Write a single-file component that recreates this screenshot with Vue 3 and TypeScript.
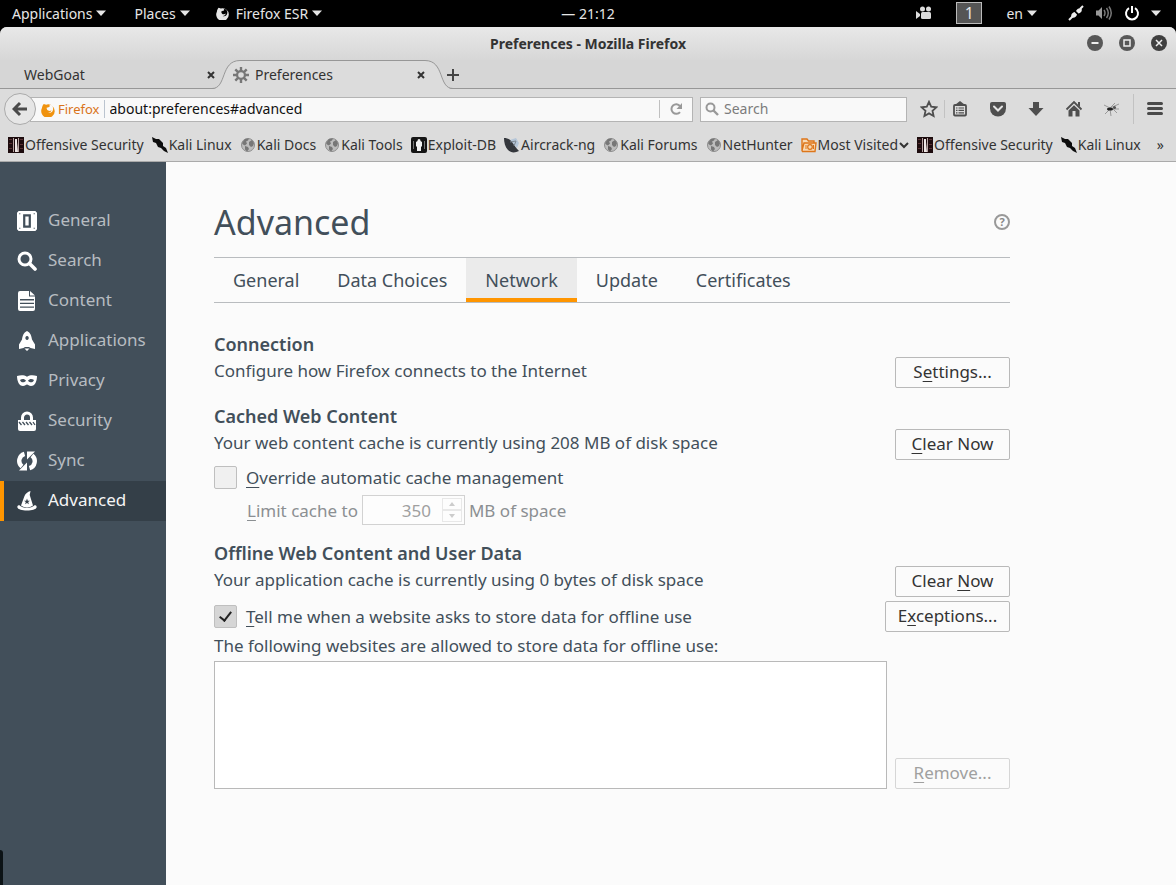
<script setup lang="ts">
import { ref } from 'vue'

interface Bookmark { icon: string; label: string; menu?: boolean }
interface Category { icon: string; label: string }

const bookmarks: Bookmark[] = [
  { icon: 'offsec', label: 'Offensive Security' },
  { icon: 'kali', label: 'Kali Linux' },
  { icon: 'globe', label: 'Kali Docs' },
  { icon: 'globe', label: 'Kali Tools' },
  { icon: 'exploit', label: 'Exploit-DB' },
  { icon: 'aircrack', label: 'Aircrack-ng' },
  { icon: 'globe', label: 'Kali Forums' },
  { icon: 'globe', label: 'NetHunter' },
  { icon: 'folder', label: 'Most Visited', menu: true },
  { icon: 'offsec', label: 'Offensive Security' },
  { icon: 'kali', label: 'Kali Linux' },
]

const categories: Category[] = [
  { icon: 'general', label: 'General' },
  { icon: 'search', label: 'Search' },
  { icon: 'content', label: 'Content' },
  { icon: 'apps', label: 'Applications' },
  { icon: 'privacy', label: 'Privacy' },
  { icon: 'security', label: 'Security' },
  { icon: 'sync', label: 'Sync' },
  { icon: 'advanced', label: 'Advanced' },
]

const tabs = ['General', 'Data Choices', 'Network', 'Update', 'Certificates']

const category = ref('Advanced')
const tab = ref('Network')
const address = ref('about:preferences#advanced')
const query = ref('')
const overrideCache = ref(false)
const cacheSize = ref('350')
const tellMe = ref(true)
</script>

<template>
  <div class="desktop">
    <svg class="sprite" aria-hidden="true">
      <symbol id="i-offsec" viewBox="0 0 16 16">
        <path fill="#1d0c0e" d="M0 0h16v16H0z" />
        <path fill="#5b3234" d="M1 2h3v1H1zM1 6h3v1H1zM1 11h3v1H1zM12 2h3v1h-3zM12 7h3v1h-3zM12 11h3v1h-3z" />
        <path fill="#b9a6a4" d="M5 1h1v14H5zM10 1h1v14h-1z" />
        <path fill="#f0e8e6" d="M7 2h2v3l1 10H7z" />
      </symbol>
      <symbol id="i-kali" viewBox="0 0 16 16">
        <path fill="#0d0d0d" d="M0 0l4 2 3 0 4 4 0 3 3 2 2 5-4-2-3-3-3-1-2-4-3-1z" />
      </symbol>
      <symbol id="i-globe" viewBox="0 0 16 16">
        <circle cx="8" cy="8" r="6.500" fill="#bdbdbd" stroke="#8d8d8d" />
        <path fill="#777" d="M2 6l3-4 4-.5-1 2-2 1 1 2-2 2-2-1zM9 5l3-2 2 3-1 3-2 1-2-2zM5 9l3 1 1 2-2 2.500-2-2z" />
      </symbol>
      <symbol id="i-exploit" viewBox="0 0 16 16">
        <rect width="16" height="16" rx="2" fill="#151515" />
        <path fill="#f2f2f2" d="M8 2c1 0 1.500.7 1.500 2l1.500 1v4l-1 1v4H6v-4L5 9V5l1.500-1C6.500 2.700 7 2 8 2z" />
        <path fill="#777" d="M2 4h1v8H2zM13 4h1v8h-1z" />
      </symbol>
      <symbol id="i-aircrack" viewBox="0 0 16 16">
        <path fill="#b5c6d8" d="M6 3l6-2 3 5-2 5z" />
        <path fill="#34373c" d="M0 1c3 0 6 1 8 4s4 6 7 9c-4 2-8 2-11-1S0 5 0 1z" />
        <path d="M6 5l6-1-2 5" fill="none" stroke="#7d8791" />
      </symbol>
      <symbol id="i-folder" viewBox="0 0 16 16">
        <path d="M1 13.500V2h5l1.500 2H13v2M1 13.500L3 6h12l-1 8.500H1.500z" fill="#f8d9b4" stroke="#dd761a" stroke-width="1.400" />
        <circle cx="9" cy="10" r="2.300" fill="none" stroke="#dd761a" stroke-width="1.200" />
        <path d="M5 8v4M12.500 8v4" stroke="#dd761a" />
      </symbol>
      <symbol id="i-firefox" viewBox="0 0 16 16">
        <path fill="currentColor" fill-rule="evenodd" d="M3 2l2.500.8A7.200 7.200 0 1 1 1 6.500C1.200 4.500 2 3 3 2zM8.500 3c1.500 1 .8 2.200-.5 2.500l-2 .7c0 1.800 1 3.300 3 3.300.8 0 1.700-.3 2.200-.8-.4 2-2 2.800-3.700 2.600 3 1.200 5.500-1 5.500-4C13 4.500 11 3 8.500 3z" />
      </symbol>
      <symbol id="i-general" viewBox="0 0 18 18">
        <path fill="currentColor" fill-rule="evenodd" d="M1.500 0h15L18 1.500v15L16.500 18h-15L0 16.500v-15zM5.500 3v12h7V3zM7.500 5h3v8h-3zM2 2v1h1V2zm13 0v1h1V2zM2 15v1h1v-1zm13 0v1h1v-1z" />
      </symbol>
      <symbol id="i-search" viewBox="0 0 20 20">
        <circle cx="8" cy="8" r="6" fill="none" stroke="currentColor" stroke-width="3" />
        <path d="M12.500 12.500L18 18" stroke="currentColor" stroke-width="3.600" stroke-linecap="round" />
      </symbol>
      <symbol id="i-content" viewBox="0 0 18 20">
        <path fill="currentColor" fill-rule="evenodd" d="M2 0h9v5.500h6V18q0 2-2 2H2q-2 0-2-2V2Q0 0 2 0zm10 0l5 4.500h-5zM2 8v1.400h14V8zm0 3.700v1.400h14v-1.400zm0 3.700v1.400h14v-1.400z" />
      </symbol>
      <symbol id="i-apps" viewBox="0 0 20 20">
        <path fill="currentColor" fill-rule="evenodd" d="M10 0c3.500 1.500 4.500 5 5 8.500l3 5V18l-4.500-1-1.500-1H8l-1.500 1L2 18v-4.500l3-5C5.500 5 6.500 1.500 10 0zm0 5a1.700 2 0 1 0 .1 0zM7.500 17.500h5L10 20z" />
      </symbol>
      <symbol id="i-privacy" viewBox="0 0 20 12">
        <path fill="currentColor" fill-rule="evenodd" d="M0 1c4-1 7-1 10 .7C13 0 16 0 20 1c0 5-2 10-6 10-2 0-3-1.500-4-1.500S8 11 6 11C2 11 0 6 0 1zm3 4c1 3 4 3 6 .7C7.500 3.500 5 3.500 3 5zm14 0c-2-1.500-4.500-1.500-6 .7C13 8 16 8 17 5z" />
      </symbol>
      <symbol id="i-security" viewBox="0 0 18 20">
        <path d="M4.500 10V6.500a4.500 4.500 0 0 1 9 0V10" fill="none" stroke="currentColor" stroke-width="3" />
        <path fill="currentColor" d="M0 9h18v9q0 2-2 2H2q-2 0-2-2z" />
        <path d="M1 11l2.500 3M4.500 11L7 14M8 11l2.500 3M11.500 11l2.500 3M15 11l2 3" stroke="#424f5a" stroke-width="1.300" />
      </symbol>
      <symbol id="i-sync" viewBox="0 0 20 20">
        <path d="M7.500 2.800A7.300 7.300 0 0 0 5 15.500M12.500 17.200A7.300 7.300 0 0 0 15 4.500" fill="none" stroke="currentColor" stroke-width="4.400" />
        <path fill="currentColor" d="M2 19.500h8v-8zM18 .5h-8v8z" />
      </symbol>
      <symbol id="i-advanced" viewBox="0 0 20 20">
        <path fill="currentColor" fill-rule="evenodd" d="M13.500 0l-.8 4L16 14.500c-3.500 2.500-8.500 2.500-12 0L7.500 5C8.500 2.500 10.500 1 13.500 0zM10 7.500l-.8 2.200H7l1.800 1.300-.7 2.200L10 12l1.900 1.200-.7-2.200L13 9.700h-2.200z" />
        <path fill="currentColor" d="M2 14c4.500 3.800 11.500 3.800 16 0 3.500 1.500 2 5.500-8 5.500S-1.500 15.500 2 14z" />
      </symbol>
      <symbol id="i-caret" viewBox="0 0 10 6"><path fill="currentColor" d="M0 .5h10L5 6z" /></symbol>
      <symbol id="i-x" viewBox="0 0 8 8"><path d="M1 1l6 6M7 1L1 7" stroke="currentColor" stroke-width="2" /></symbol>
    </svg>

    <header class="panel">
      <div class="panel-side">
        <button class="panel-item apps">Applications <svg class="caret"><use href="#i-caret" /></svg></button>
        <button class="panel-item places">Places <svg class="caret"><use href="#i-caret" /></svg></button>
        <button class="panel-item">
          <svg class="fx"><use href="#i-firefox" /></svg>Firefox ESR <svg class="caret"><use href="#i-caret" /></svg>
        </button>
      </div>
      <div class="clock">— 21:12</div>
      <div class="panel-side status">
        <svg class="camera" viewBox="0 0 16 14" aria-hidden="true">
          <g fill="#ddd"><circle cx="6.500" cy="3" r="2.500" /><circle cx="12.500" cy="3" r="2.500" /><rect x="5" y="6" width="10" height="7" rx="1.500" /><path d="M0 5l4 3v2l-4 3z" /></g>
        </svg>
        <span class="workspace">1</span>
        <button class="panel-item lang">en <svg class="caret"><use href="#i-caret" /></svg></button>
        <button class="panel-item tray" aria-label="System menu">
          <svg width="16" height="16" viewBox="0 0 16 16"><path d="M1 15l4-4" stroke="#eee" stroke-width="2" /><path d="M15 1l-3 3" stroke="#eee" stroke-width="2" /><path d="M3.500 12.500c-1-3 1-5 3-5.500l2.500 2.500c-.5 2-2.500 4-5.500 3zM8 6c1-2 3-3.500 5.500-2.500C14.500 6 13 8 10.500 8.500z" fill="#eee" /></svg>
          <svg width="18" height="16" viewBox="0 0 18 16"><path fill="#999" d="M1 5.500h2.500L7 2v12l-3.500-3.500H1z" /><path d="M9 5q2 3 0 6M11.500 3q3.500 5 0 10M14 1.500q4.500 6.500 0 13" fill="none" stroke="#777" stroke-width="1.500" /></svg>
          <svg width="16" height="16" viewBox="0 0 16 16"><path d="M5 3.200a6 6 0 1 0 6 0M8 1v7" fill="none" stroke="#fff" stroke-width="2" /></svg>
          <svg class="caret"><use href="#i-caret" /></svg>
        </button>
      </div>
    </header>

    <div class="window">
      <div class="chrome">
        <div class="titlebar">
          <span></span>
          <strong>Preferences - Mozilla Firefox</strong>
          <div class="controls">
            <button aria-label="Minimize"><svg viewBox="0 0 16 16"><circle cx="8" cy="8" r="8" fill="#585858" /><path d="M4.500 8h7" stroke="#eee" stroke-width="2" /></svg></button>
            <button aria-label="Maximize"><svg viewBox="0 0 16 16"><circle cx="8" cy="8" r="8" fill="#585858" /><path d="M5 5h6v6H5z" fill="none" stroke="#eee" stroke-width="1.500" /></svg></button>
            <button aria-label="Close"><svg viewBox="0 0 16 16"><circle cx="8" cy="8" r="8" fill="#404040" /><path d="M5 5l6 6M11 5l-6 6" stroke="#eee" stroke-width="1.500" /></svg></button>
          </div>
        </div>

        <div class="tabstrip">
          <div class="browser-tab">
            <span class="tab-title">WebGoat</span>
            <button class="tab-close" aria-label="Close WebGoat"><svg><use href="#i-x" /></svg></button>
          </div>
          <svg class="edge" viewBox="0 0 28 29"><path fill="#dcdcdc" d="M0 29C14 29 9 1 28 1v28z" /><path fill="none" stroke="#979797" d="M0 28.500C15 28.500 8 .5 28 .5" /></svg>
          <div class="browser-tab current">
            <svg class="gear" viewBox="0 0 16 16">
              <path d="M8 0v16M0 8h16M2.300 2.300l11.400 11.400M13.700 2.300L2.300 13.700" stroke="#777" stroke-width="2.400" />
              <circle cx="8" cy="8" r="5" fill="#777" /><circle cx="8" cy="8" r="2.800" fill="#dcdcdc" />
            </svg>
            <span class="tab-title">Preferences</span>
            <button class="tab-close" aria-label="Close Preferences"><svg><use href="#i-x" /></svg></button>
          </div>
          <svg class="edge" viewBox="0 0 28 29"><path fill="#dcdcdc" d="M28 29C14 29 19 1 0 1v28z" /><path fill="none" stroke="#979797" d="M28 28.500C13 28.500 20 .5 0 .5" /></svg>
          <button class="new-tab" aria-label="New tab"><svg viewBox="0 0 12 12"><path d="M6 0v12M0 6h12" stroke="#444" stroke-width="2" /></svg></button>
        </div>

        <div class="navbar">
          <button class="back" aria-label="Back"><svg viewBox="0 0 16 16"><path d="M15 8H3M8 2L2 8l6 6" fill="none" stroke="#4a4a4a" stroke-width="3" /></svg></button>
          <div class="urlbar">
            <svg class="fx orange"><use href="#i-firefox" /></svg>
            <span class="identity">Firefox</span>
            <input v-model="address" aria-label="Address" />
            <button class="reload" aria-label="Reload"><svg viewBox="0 0 14 14"><path d="M11 10a4.800 4.800 0 1 1 0-6" fill="none" stroke="#999" stroke-width="2" /><path d="M13 1v6H7.500z" fill="#999" /></svg></button>
          </div>
          <label class="searchbar">
            <svg viewBox="0 0 14 14"><circle cx="5.500" cy="5.500" r="4" fill="none" stroke="#999" stroke-width="2" /><path d="M8.500 8.500L13 13" stroke="#999" stroke-width="2.400" /></svg>
            <input v-model="query" placeholder="Search" aria-label="Search" />
          </label>
          <div class="tools">
            <button class="star" aria-label="Bookmark this page"><svg viewBox="0 0 18 18"><path d="M9 1.800l2.200 4.900 5.200.6-3.900 3.500 1.100 5.200L9 13.400 4.400 16l1.100-5.200-3.900-3.500 5.200-.6z" fill="none" stroke="#4f4f4f" stroke-width="1.800" /></svg></button>
            <span class="rule short"></span>
            <button aria-label="Bookmarks"><svg viewBox="0 0 18 18"><rect x="3" y="5" width="12" height="10.500" rx="1" fill="none" stroke="#4f4f4f" stroke-width="1.800" /><path d="M4.500 4.500L9 1l4.500 3.500z" fill="#4f4f4f" /><path d="M5 8h1.500M7.500 8H13M5 10.400h1.500M7.500 10.400H13M5 12.800h1.500M7.500 12.800H13" stroke="#4f4f4f" stroke-width="1.200" /></svg></button>
            <button aria-label="Pocket"><svg viewBox="0 0 18 18"><path fill="#4f4f4f" d="M3 2h12q2 0 2 2v4.500a8 8 0 0 1-16 0V4q0-2 2-2z" /><path d="M5 6.500l4 4 4-4" fill="none" stroke="#e4e4e4" stroke-width="2" stroke-linecap="round" /></svg></button>
            <button aria-label="Downloads"><svg viewBox="0 0 18 18"><path fill="#4f4f4f" d="M6 2h6v6h4.500L9 16 1.500 8H6z" /></svg></button>
            <button aria-label="Home"><svg viewBox="0 0 18 18"><path d="M1.500 9.500L9 2l7.500 7.500" fill="none" stroke="#4f4f4f" stroke-width="1.800" /><path fill="#4f4f4f" d="M13 2h2v5l-2-2zM3.500 10.500L9 5.300l5.500 5.200v6h-4V11h-3v5.500h-4z" /></svg></button>
            <button aria-label="Wasp"><svg viewBox="0 0 18 18"><path d="M1 5l6 3 9-4M7 9l9 0M2 14l5-5 1 7M6 9l6-6M10 9l4 4" fill="none" stroke="#999" /><ellipse cx="7" cy="9" rx="3" ry="1.600" fill="#222" /><circle cx="11.500" cy="7.500" r="1.500" fill="#555" /></svg></button>
            <span class="rule tall"></span>
            <button aria-label="Open menu"><svg viewBox="0 0 18 18"><path d="M2.500 3.500h13M2.500 8.500h13M2.500 13.500h13" stroke="#4a4a4a" stroke-width="3" stroke-linecap="round" /></svg></button>
          </div>
        </div>

        <nav class="bookmarks" aria-label="Bookmarks">
          <a v-for="(b, i) in bookmarks" :key="i" href="#"><svg><use :href="'#i-' + b.icon" /></svg><span>{{ b.label }}</span><svg v-if="b.menu" class="chevron" viewBox="0 0 10 16"><path d="M1 6l4 4 4-4" fill="none" stroke="#333" stroke-width="2" /></svg></a>
          <button class="more" aria-label="More bookmarks">»</button>
        </nav>
      </div>

      <div class="page">
        <nav class="sidebar" aria-label="Categories">
          <button v-for="c in categories" :key="c.label" :class="{ selected: c.label === category }" @click="category = c.label">
            <svg><use :href="'#i-' + c.icon" /></svg><span>{{ c.label }}</span>
          </button>
          <span class="dock"></span>
        </nav>

        <main>
          <div class="content">
            <header class="heading">
              <h1>{{ category }}</h1>
              <button class="help" aria-label="Help">?</button>
            </header>

            <div class="subtabs" role="tablist">
              <button v-for="t in tabs" :key="t" role="tab" :aria-selected="t === tab" :class="{ on: t === tab }" @click="tab = t">{{ t }}</button>
            </div>

            <section>
              <h2>Connection</h2>
              <div class="row"><p>Configure how Firefox connects to the Internet</p><button class="action">S<u>e</u>ttings...</button></div>
            </section>

            <section>
              <h2>Cached Web Content</h2>
              <div class="row"><p>Your web content cache is currently using 208 MB of disk space</p><button class="action"><u>C</u>lear Now</button></div>
              <label class="check override"><input v-model="overrideCache" type="checkbox" /><span><u>O</u>verride automatic cache management</span></label>
              <div class="limit">
                <label for="cache-size"><u>L</u>imit cache to</label>
                <span class="spin">
                  <input id="cache-size" v-model="cacheSize" type="text" :disabled="!overrideCache" />
                  <span class="arrows">
                    <button disabled aria-label="Increase"><svg viewBox="0 0 6 4"><path fill="#ccc" d="M0 4l3-4 3 4z" /></svg></button>
                    <button disabled aria-label="Decrease"><svg viewBox="0 0 6 4"><path fill="#ccc" d="M0 0l3 4 3-4z" /></svg></button>
                  </span>
                </span>
                <span>MB of space</span>
              </div>
            </section>

            <section>
              <h2>Offline Web Content and User Data</h2>
              <div class="row"><p>Your application cache is currently using 0 bytes of disk space</p><button class="action">Clear <u>N</u>ow</button></div>
              <div class="row offline">
                <label class="check"><input v-model="tellMe" type="checkbox" /><span><u>T</u>ell me when a website asks to store data for offline use</span></label>
                <button class="action wide">E<u>x</u>ceptions...</button>
              </div>
              <p id="sites-label">The following websites are allowed to store data for offline use:</p>
              <div class="sites">
                <div class="list" role="listbox" aria-labelledby="sites-label"></div>
                <button class="action" disabled><u>R</u>emove...</button>
              </div>
            </section>
          </div>
        </main>
      </div>
    </div>
  </div>
</template>

<style>
body {
  margin: 0;
  background: #000;
}
</style>

<style scoped>
.desktop {
  display: flex;
  flex-direction: column;
  min-height: 100vh;
  background: #000;
  font-family: "Noto Sans", "Open Sans", sans-serif;
  font-size: 14px;
  color: #333;
}
.desktop * { box-sizing: border-box; }
.sprite { position: absolute; width: 0; height: 0; }
button {
  font: inherit;
  color: inherit;
  background: none;
  border: 0;
  padding: 0;
  margin: 0;
}
input { font: inherit; color: inherit; min-width: 0; margin: 0; }
svg { flex: none; display: block; }
a { color: inherit; text-decoration: none; }

.panel {
  display: grid;
  grid-template-columns: 1fr auto 1fr;
  align-items: center;
  height: 27px;
  padding-bottom: 1px;
  color: #e6e6e6;
}
.panel-side { display: flex; align-items: center; padding-left: 12px; }
.panel-item { display: flex; align-items: center; gap: 4px; white-space: nowrap; }
.apps { margin-right: 28px; }
.places { margin-right: 26px; }
.caret { width: 10px; height: 6px; }
.fx { width: 14px; height: 14px; margin-right: 2px; }
.status { justify-content: flex-end; padding-right: 15px; }
.camera { width: 16px; height: 14px; margin-right: 24px; }
.workspace {
  width: 26px;
  height: 22px;
  line-height: 20px;
  text-align: center;
  font-size: 16px;
  background: #555;
  border: 1px solid #bbb;
  margin-right: 24px;
}
.lang { margin-right: 31px; }
.tray { gap: 11px; }

.window { display: flex; flex-direction: column; flex: 1; }
.chrome {
  border-radius: 7px 7px 0 0;
  background: #dcdcdc;
  border-bottom: 1px solid #aaa;
  overflow: hidden;
}
.titlebar {
  display: grid;
  grid-template-columns: 1fr auto 1fr;
  align-items: center;
  height: 33px;
  padding-bottom: 1px;
  background: linear-gradient(#e8e8e8, #d7d7d7);
}
.controls { display: flex; justify-content: flex-end; gap: 16px; padding-right: 9px; }
.controls svg { width: 16px; height: 16px; }

.tabstrip {
  display: flex;
  height: 29px;
  background: #d6d6d6;
  box-shadow: inset 0 -1px #979797;
}
.browser-tab { display: flex; align-items: center; width: 212px; padding-left: 24px; }
.current {
  width: 185px;
  padding-left: 0;
  background: #dcdcdc;
  border-top: 1px solid #979797;
}
.browser-tab:first-child .tab-close { margin-right: -3px; }
.tab-title { flex: 1; padding-bottom: 1px; }
.edge { width: 28px; height: 29px; }
.gear { width: 16px; height: 16px; margin: 0 6px 0 -7px; }
.tab-close { display: flex; justify-content: flex-end; width: 10px; }
.tab-close svg { width: 8px; height: 8px; }
.new-tab { margin-left: -6px; }
.new-tab svg { width: 12px; height: 12px; }

.navbar { display: flex; align-items: center; height: 40px; padding: 0 6px 0 4px; }
.back {
  display: flex;
  align-items: center;
  justify-content: center;
  width: 32px;
  height: 32px;
  border: 1px solid #aaa;
  border-radius: 50%;
  background: #e6e6e6;
  z-index: 1;
}
.back svg { width: 16px; height: 16px; }
.urlbar {
  display: flex;
  align-items: center;
  flex: 1;
  height: 25px;
  margin: 0 7px 0 -6px;
  padding-left: 10px;
  background: #f9f9f9;
  border: 1px solid #b4b4b4;
}
.orange { width: 15px; height: 15px; color: #f0930f; }
.identity {
  font-size: 13px;
  color: #d9741a;
  padding-right: 4px;
  border-right: 1px solid #bbc4cf;
}
.urlbar input {
  flex: 1;
  padding: 0 0 2px 5px;
  border: 0;
  outline: 0;
  background: none;
  color: #111;
}
.reload {
  display: flex;
  justify-content: center;
  width: 33px;
  padding: 2px 0;
  border-left: 1px solid #c0c0c0;
}
.reload svg { width: 14px; height: 14px; }
.searchbar {
  display: flex;
  align-items: center;
  gap: 5px;
  width: 207px;
  height: 25px;
  padding: 0 4px;
  background: #f9f9f9;
  border: 1px solid #b4b4b4;
}
.searchbar svg { width: 14px; height: 14px; }
.searchbar input { flex: 1; padding: 0 0 2px; border: 0; outline: 0; background: none; }
.searchbar input::placeholder { color: #7c7c7c; opacity: 1; }
.tools { display: flex; align-items: center; gap: 8px; padding-left: 8px; }
.tools button { display: flex; justify-content: center; width: 30px; }
.tools .star { width: 28px; margin-right: -8px; }
.tools svg { width: 18px; height: 18px; }
.rule { width: 1px; background: #c2c2c2; }
.short { height: 18px; margin: 0 -8px 0 1px; }
.tall { height: 30px; margin: 0 -2px 0 -2px; }

.bookmarks {
  display: flex;
  align-items: center;
  justify-content: space-between;
  height: 32px;
  padding: 0 12px 0 8px;
}
.bookmarks a { display: flex; align-items: center; gap: 1px; white-space: nowrap; }
.bookmarks span { padding-bottom: 2px; }
.bookmarks svg { width: 16px; height: 16px; }
.bookmarks .chevron { width: 10px; }
.more { padding-left: 8px; padding-bottom: 2px; }

.page { display: flex; flex: 1; }
.sidebar {
  position: relative;
  display: flex;
  flex-direction: column;
  width: 166px;
  padding-top: 39px;
  background: #424f5a;
  flex: none;
}
.sidebar button {
  display: flex;
  align-items: center;
  gap: 11px;
  height: 40px;
  padding-left: 13px;
  border-left: 4px solid transparent;
  font-size: 17px;
  color: #b7bcc1;
}
.sidebar button span { padding-bottom: 3px; }
.sidebar button svg { width: 20px; height: 20px; color: #fff; }
.sidebar .selected { background: #343f48; border-color: #ff9500; color: #f5f5f5; }
.dock {
  position: absolute;
  left: 0;
  bottom: 0;
  width: 3px;
  height: 35px;
  border-radius: 0 3px 0 0;
  background: #0c1316;
}

main { flex: 1; padding: 40px 48px; background: #fbfbfb; color: #424f5a; font-size: 17px; }
.content { max-width: 796px; }
.heading { display: flex; align-items: center; justify-content: space-between; height: 40px; margin-bottom: 15px; }
h1 { margin: 0; font-size: 34px; font-weight: 400; }
.help {
  width: 16px;
  height: 16px;
  line-height: 12px;
  border: 2px solid #999;
  border-radius: 50%;
  font-size: 11px;
  font-weight: 700;
  color: #888;
}
.subtabs {
  display: flex;
  height: 46px;
  margin-bottom: 29px;
  border-top: 1px solid #b9bcbf;
  border-bottom: 1px solid #b9bcbf;
}
.subtabs button { padding: 4px 19px 0; font-size: 18px; border-bottom: 4px solid transparent; }
.subtabs .on { background: #ebebeb; border-color: #ff9500; }

section { margin-bottom: 16px; }
h2 { margin: 0; font-size: 18px; line-height: 25px; font-weight: 600; }
p { margin: 0; line-height: 28px; }
#sites-label { margin-bottom: 1px; }
u { text-underline-offset: 3px; text-decoration-thickness: 1px; text-decoration-skip-ink: none; }
.row { display: flex; justify-content: space-between; align-items: flex-start; }
.action {
  width: 115px;
  height: 31px;
  padding-bottom: 2px;
  border: 1px solid #b9b9b9;
  border-radius: 2px;
  color: #333;
}
.wide { width: 125px; }
.action:disabled { color: #a0a0a0; border-color: #d6d6d6; }
.check { display: flex; align-items: center; gap: 9px; height: 23px; }
.override { margin: 6px 0; }
.check input {
  appearance: none;
  width: 23px;
  height: 23px;
  border: 1px solid #bfbfbf;
  border-radius: 2px;
  background: #f0f0f0;
}
.check input:checked {
  background: #d6d6d6;
}
.check input:checked::after {
  content: "";
  display: block;
  width: 5px;
  height: 10px;
  margin: 3px 0 0 7px;
  border: solid #222;
  border-width: 0 2px 2px 0;
  transform: rotate(38deg);
}
.limit { display: flex; align-items: center; gap: 4px; height: 30px; padding-left: 33px; color: #8b8f92; }
.spin {
  display: flex;
  width: 103px;
  height: 30px;
  padding: 2px;
  border: 1px solid #d2d2d2;
  background: #fdfdfd;
}
.spin input { width: 66px; padding: 0; border: 0; background: none; text-align: right; color: #a0a0a0; }
.arrows { display: flex; flex-direction: column; width: 20px; margin-left: auto; }
.arrows button {
  display: flex;
  flex: 1;
  align-items: center;
  justify-content: center;
  border: 1px solid #e8e8e8;
}
.arrows svg { width: 6px; height: 4px; }
.offline { align-items: center; margin-top: 4px; }
.sites { display: flex; align-items: flex-end; gap: 8px; }
.list { flex: 1; height: 128px; background: #fff; border: 1px solid #b9b9b9; }
</style>
